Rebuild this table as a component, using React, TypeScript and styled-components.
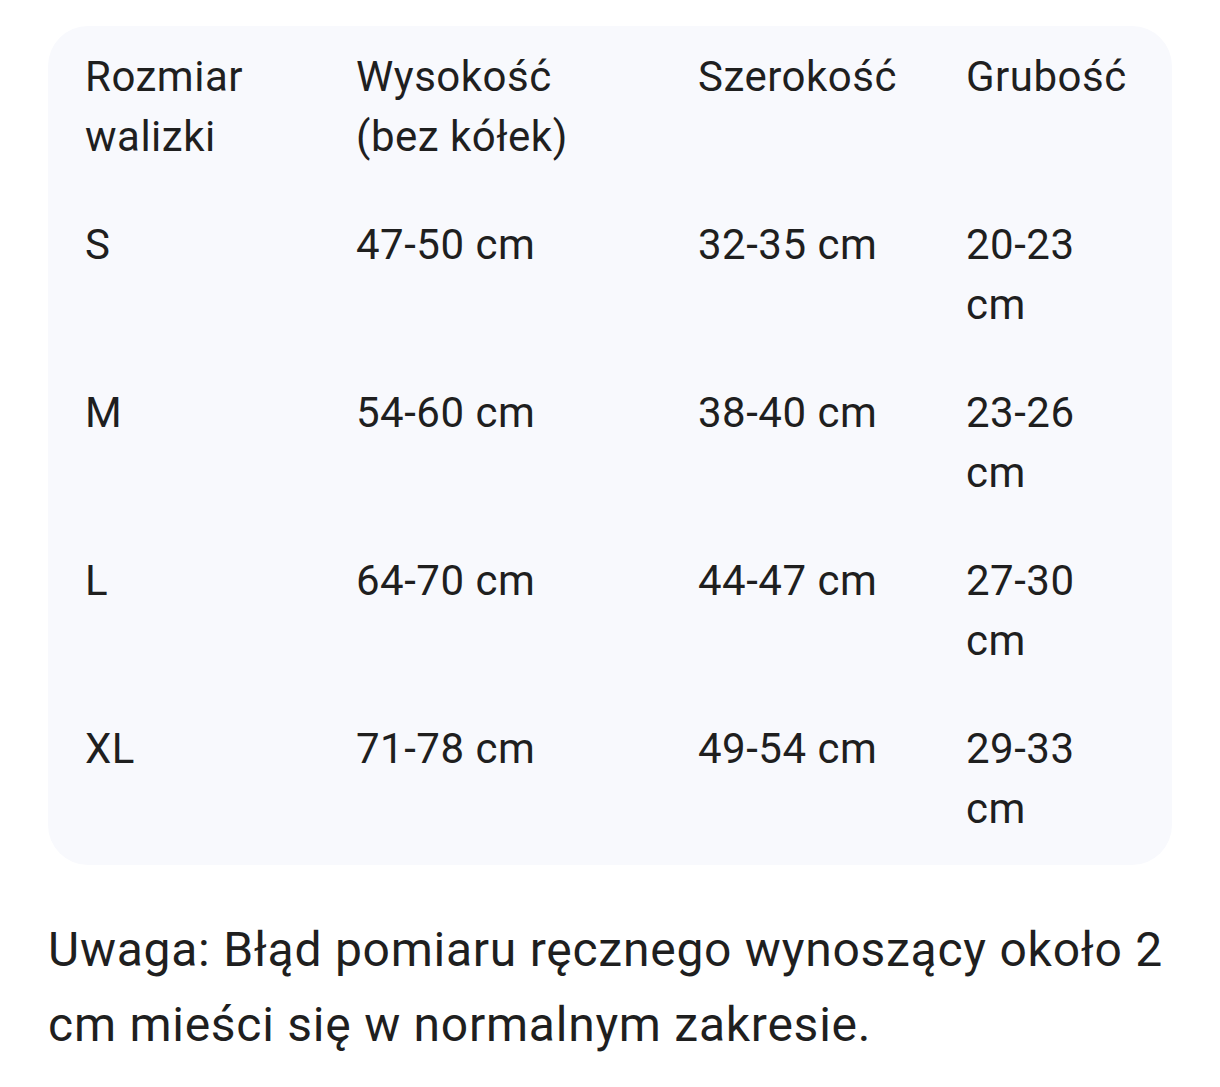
import React from "react";
import styled, { createGlobalStyle } from "styled-components";

const GlobalStyle = createGlobalStyle`
  html, body {
    margin: 0;
    padding: 0;
    background: #ffffff;
  }
  body {
    font-family: Roboto, "Noto Sans", sans-serif;
    color: #1f1f1f;
  }
`;

const Page = styled.div`
  padding: 26px 48px 0 48px;
  width: 1124px;
`;

const Card = styled.div`
  background: #f8f9fd;
  border-radius: 40px;
  padding: 21px 37px 26px 37px;
`;

const Table = styled.div`
  display: grid;
  grid-template-columns: 211px 282px 208px 1fr;
  column-gap: 60px;
  row-gap: 48px;
`;

const Cell = styled.div`
  font-size: 42px;
  line-height: 60px;
  letter-spacing: 0.5px;
  min-height: 120px;
`;

const Note = styled.p`
  margin: 47px 0 0 0;
  font-size: 48px;
  line-height: 75px;
  letter-spacing: 0.75px;
`;

const rows = [
  ["Rozmiar walizki", "Wysokość (bez kółek)", "Szerokość", "Grubość"],
  ["S", "47-50 cm", "32-35 cm", "20-23 cm"],
  ["M", "54-60 cm", "38-40 cm", "23-26 cm"],
  ["L", "64-70 cm", "44-47 cm", "27-30 cm"],
  ["XL", "71-78 cm", "49-54 cm", "29-33 cm"],
];

export default function App() {
  return (
    <>
      <GlobalStyle />
      <Page>
        <Card>
          <Table>
            {rows.map((row, i) =>
              row.map((text, j) => <Cell key={`${i}-${j}`}>{text}</Cell>)
            )}
          </Table>
        </Card>
        <Note>
          Uwaga: Błąd pomiaru ręcznego wynoszący około 2 cm mieści się w
          normalnym zakresie.
        </Note>
      </Page>
    </>
  );
}
